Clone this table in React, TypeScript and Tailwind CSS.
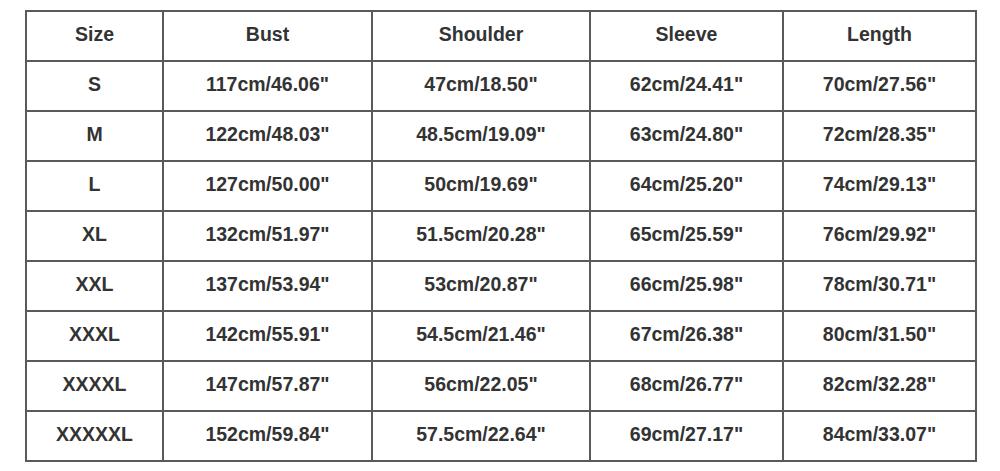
import React from 'react';

const cols = [
  { label: 'Size', w: 'w-[137px]' },
  { label: 'Bust', w: 'w-[209px]' },
  { label: 'Shoulder', w: 'w-[218px]' },
  { label: 'Sleeve', w: 'w-[193px]' },
  { label: 'Length', w: 'w-[193px]' },
];

const rows = [
  ['S', '117cm/46.06"', '47cm/18.50"', '62cm/24.41"', '70cm/27.56"'],
  ['M', '122cm/48.03"', '48.5cm/19.09"', '63cm/24.80"', '72cm/28.35"'],
  ['L', '127cm/50.00"', '50cm/19.69"', '64cm/25.20"', '74cm/29.13"'],
  ['XL', '132cm/51.97"', '51.5cm/20.28"', '65cm/25.59"', '76cm/29.92"'],
  ['XXL', '137cm/53.94"', '53cm/20.87"', '66cm/25.98"', '78cm/30.71"'],
  ['XXXL', '142cm/55.91"', '54.5cm/21.46"', '67cm/26.38"', '80cm/31.50"'],
  ['XXXXL', '147cm/57.87"', '56cm/22.05"', '68cm/26.77"', '82cm/32.28"'],
  ['XXXXXL', '152cm/59.84"', '57.5cm/22.64"', '69cm/27.17"', '84cm/33.07"'],
];

export default function App() {
  return (
    <div
      className="w-[1000px] h-[471px] bg-white pt-[10px] pl-[25px]"
      style={{ fontFamily: "'Liberation Sans', Arial, sans-serif" }}
    >
      <table className="border-collapse table-fixed w-[950px] text-[#333] text-[19.5px] font-bold">
        <thead>
          <tr className="h-[50px]">
            {cols.map((c) => (
              <th key={c.label} className={`${c.w} border-2 border-[#5a5a5a] text-center font-bold p-0 pb-[3px]`}>
                {c.label}
              </th>
            ))}
          </tr>
        </thead>
        <tbody>
          {rows.map((r) => (
            <tr key={r[0]} className="h-[50px]">
              {r.map((cell, i) => (
                <td key={i} className="border-2 border-[#5a5a5a] text-center p-0 pb-[3px]">
                  {cell}
                </td>
              ))}
            </tr>
          ))}
        </tbody>
      </table>
    </div>
  );
}
